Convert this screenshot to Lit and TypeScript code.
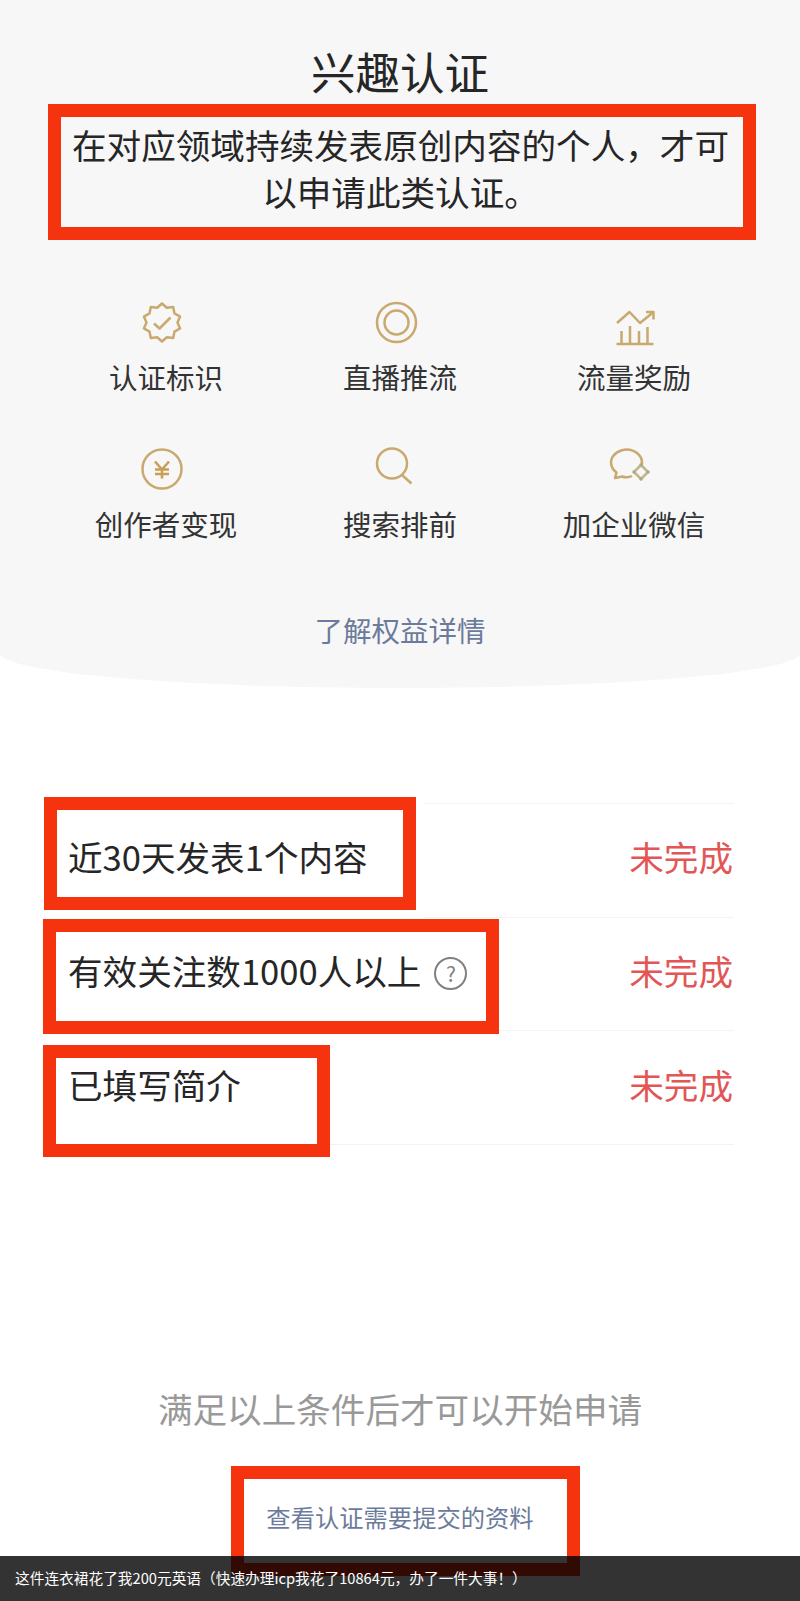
import { LitElement, css, html, svg } from "lit";
import { customElement } from "lit/decorators.js";

// ten point seal, alternating radius
const sealPoints = () => {
  const pts: string[] = [];
  for (let i = 0; i < 20; i++) {
    const r = i % 2 ? 15.5 : 19;
    const a = (Math.PI * i) / 10 - Math.PI / 2;
    pts.push(`${(22 + r * Math.cos(a)).toFixed(1)},${(22.5 + r * Math.sin(a)).toFixed(1)}`);
  }
  return pts.join(" ");
};

const perks = [
  {
    label: "认证标识",
    icon: svg`<polygon points=${sealPoints()} /><polyline points="14,23.5 19.5,28.5 30.5,17.5" />`,
  },
  {
    label: "直播推流",
    icon: svg`<circle cx="22.5" cy="22.5" r="19.5" /><circle cx="22.5" cy="22.5" r="12" />`,
  },
  {
    label: "流量奖励",
    icon: svg`<polyline points="9,23 21.5,12 32,23 45,12.5" />
      <polyline points="38,12 45.5,12 45.5,19.5" />
      <path d="M8.5 44H45.5M13.5 44V31M22 44V26M31 44V31M39.5 44V27" />`,
  },
  {
    label: "创作者变现",
    icon: svg`<circle cx="22" cy="22" r="19.5" />
      <path class="yen" d="M15 14.5L22 22.5L29 14.5M22 22.5V31.5M15 22.5H29M15 27H29" />`,
  },
  {
    label: "搜索排前",
    icon: svg`<circle cx="18" cy="16.5" r="15" /><path d="M28.5 28.5L37.5 36.5" />`,
  },
  {
    label: "加企业微信",
    icon: svg`<path d="M33.5 19A15.5 13 0 1 0 8.5 25.5L7 31L14 29.5C17 30.5 21 30.5 24 29" />
      <polygon class="gem" points="33,18 40,25 33,32 26,25" />
      <circle class="dot" cx="33" cy="18" r="1.7" /><circle class="dot" cx="40" cy="25" r="1.7" />
      <circle class="dot" cx="33" cy="32" r="1.7" /><circle class="dot" cx="26" cy="25" r="1.7" />`,
  },
];

const conditions = [
  { text: "近30天发表1个内容", help: false, mark: "mark-a" },
  { text: "有效关注数1000人以上", help: true, mark: "mark-b" },
  { text: "已填写简介", help: false, mark: "mark-c" },
];

@customElement("app-root")
export class AppRoot extends LitElement {
  static styles = css`
    :host {
      display: block;
      font-family: "Noto Sans CJK SC", "Noto Sans", sans-serif;
      color: #262626;
    }
    .page {
      position: relative;
      height: 1601px;
      overflow: hidden;
      background: #fff;
    }
    .panel {
      height: 688px;
      padding-top: 45px;
      box-sizing: border-box;
      background: #f7f7f8;
      border-radius: 0 0 50% 50% / 0 0 35px 35px;
      text-align: center;
    }
    .title {
      font-size: 44.5px;
      line-height: 52px;
      font-weight: 400;
      margin: 0;
    }
    .desc {
      margin: 7px 44px 0 48px;
      padding: 4px 3px 12px 0;
      border: 13px solid #f5340f;
      font-size: 34.6px;
      line-height: 47px;
    }
    .perks {
      display: grid;
      grid-template-columns: repeat(3, 234px);
      row-gap: 50px;
      margin: 60px 49px 0;
    }
    .perk {
      display: flex;
      flex-direction: column;
      align-items: center;
      gap: 13px;
    }
    .perk svg {
      width: 52px;
      height: 44px;
      overflow: visible;
      fill: none;
      stroke: #c9a96e;
      stroke-width: 2.5;
      stroke-linejoin: round;
    }
    .perk svg .yen {
      stroke: #c99f55;
      stroke-width: 2.6;
    }
    .perk svg .gem {
      stroke: #c4b68c;
    }
    .perk svg .dot {
      fill: #a9a98c;
      stroke: none;
    }
    .perk span {
      font-size: 28.5px;
      line-height: 40px;
      color: #333;
    }
    .more {
      margin-top: 66px;
      font-size: 28.5px;
      line-height: 40px;
      color: #6c7b9b;
    }
    .list {
      margin: 115px 66px 0;
      border-top: 1px solid #f3f3f3;
    }
    .row {
      position: relative;
      display: flex;
      justify-content: space-between;
      align-items: center;
      height: 113.67px;
      box-sizing: border-box;
      padding: 0 1px 8px 2px;
      border-bottom: 1px solid #f3f3f3;
      font-size: 34.6px;
      line-height: 48px;
    }
    .cond {
      display: flex;
      align-items: center;
      gap: 13px;
    }
    .help {
      display: flex;
      align-items: center;
      justify-content: center;
      width: 33px;
      height: 33px;
      margin-top: 8px;
      box-sizing: border-box;
      border: 2px solid #808080;
      border-radius: 50%;
      font-size: 21px;
      line-height: 1;
      color: #808080;
    }
    .status {
      color: #e25656;
    }
    .mark {
      position: absolute;
      box-sizing: border-box;
      border: 13px solid #f5340f;
    }
    .mark-a {
      left: -22px;
      top: -7px;
      width: 372px;
      height: 113px;
      box-shadow: 0 0 0 8px #fff;
    }
    .mark-b {
      left: -23px;
      top: 1px;
      width: 456px;
      height: 115px;
    }
    .mark-c {
      left: -23px;
      top: 14px;
      width: 287px;
      height: 112px;
    }
    .hint {
      margin-top: 239px;
      font-size: 34.6px;
      line-height: 48px;
      text-align: center;
      color: #999;
    }
    .link-wrap {
      display: flex;
      justify-content: center;
      margin-top: 65px;
    }
    .link {
      position: relative;
      font-size: 24.3px;
      line-height: 40px;
      color: #6c7b9b;
    }
    .mark-link {
      left: -35px;
      top: -31px;
      width: 349px;
      height: 110px;
    }
    .caption {
      position: absolute;
      left: 0;
      right: 0;
      bottom: 0;
      height: 45px;
      padding-left: 15px;
      box-sizing: border-box;
      background: rgba(0, 0, 0, 0.8);
      color: #fff;
      font-size: 14.7px;
      line-height: 44px;
    }
  `;

  render() {
    return html`
      <div class="page">
        <section class="panel">
          <h1 class="title">兴趣认证</h1>
          <div class="desc">在对应领域持续发表原创内容的个人，才可以申请此类认证。</div>
          <div class="perks">
            ${perks.map(
              (p) => html`<div class="perk">
                <svg viewBox="0 0 52 44">${p.icon}</svg>
                <span>${p.label}</span>
              </div>`
            )}
          </div>
          <div class="more">了解权益详情</div>
        </section>

        <div class="list">
          ${conditions.map(
            (c) => html`<div class="row">
              <div class="cond">
                <span>${c.text}</span>
                ${c.help ? html`<span class="help">?</span>` : ""}
              </div>
              <span class="status">未完成</span>
              <div class="mark ${c.mark}"></div>
            </div>`
          )}
        </div>

        <div class="hint">满足以上条件后才可以开始申请</div>
        <div class="link-wrap">
          <div class="link">
            查看认证需要提交的资料
            <div class="mark mark-link"></div>
          </div>
        </div>

        <div class="caption">这件连衣裙花了我200元英语（快速办理icp我花了10864元，办了一件大事！）</div>
      </div>
    `;
  }
}
